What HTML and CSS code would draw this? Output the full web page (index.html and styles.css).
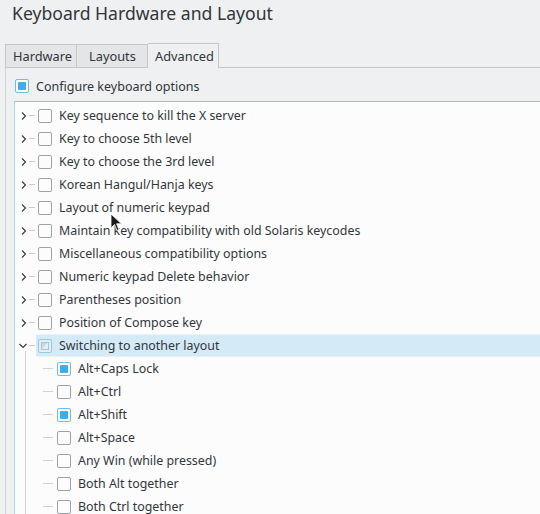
FILE: index.html
```html
<!DOCTYPE html>
<html>
<head>
<meta charset="utf-8">
<link rel="stylesheet" href="styles.css">
</head>
<body>
<div class="title">Keyboard Hardware and Layout</div>
<div class="tabbar">
  <div class="tab">Hardware</div>
  <div class="tab">Layouts</div>
  <div class="tab active">Advanced</div>
  <div class="filler"></div>
</div>
<div class="panel">
  <div class="configure"><span class="cb checked"></span><span>Configure keyboard options</span></div>
  <div class="tree">
    <div class="row"><span class="exp"><svg class="chev" width="8" height="8" viewBox="0 0 8 8"><polyline points="2,0.5 5.5,4 2,7.5"/></svg><span class="dash"></span></span><span class="item"><span class="cb"></span><span>Key sequence to kill the X server</span></span></div>
    <div class="row"><span class="exp"><svg class="chev" width="8" height="8" viewBox="0 0 8 8"><polyline points="2,0.5 5.5,4 2,7.5"/></svg><span class="dash"></span></span><span class="item"><span class="cb"></span><span>Key to choose 5th level</span></span></div>
    <div class="row"><span class="exp"><svg class="chev" width="8" height="8" viewBox="0 0 8 8"><polyline points="2,0.5 5.5,4 2,7.5"/></svg><span class="dash"></span></span><span class="item"><span class="cb"></span><span>Key to choose the 3rd level</span></span></div>
    <div class="row"><span class="exp"><svg class="chev" width="8" height="8" viewBox="0 0 8 8"><polyline points="2,0.5 5.5,4 2,7.5"/></svg><span class="dash"></span></span><span class="item"><span class="cb"></span><span>Korean Hangul/Hanja keys</span></span></div>
    <div class="row"><span class="exp"><svg class="chev" width="8" height="8" viewBox="0 0 8 8"><polyline points="2,0.5 5.5,4 2,7.5"/></svg><span class="dash"></span></span><span class="item"><span class="cb"></span><span>Layout of numeric keypad</span></span></div>
    <div class="row"><span class="exp"><svg class="chev" width="8" height="8" viewBox="0 0 8 8"><polyline points="2,0.5 5.5,4 2,7.5"/></svg><span class="dash"></span></span><span class="item"><span class="cb"></span><span>Maintain key compatibility with old Solaris keycodes</span></span></div>
    <div class="row"><span class="exp"><svg class="chev" width="8" height="8" viewBox="0 0 8 8"><polyline points="2,0.5 5.5,4 2,7.5"/></svg><span class="dash"></span></span><span class="item"><span class="cb"></span><span>Miscellaneous compatibility options</span></span></div>
    <div class="row"><span class="exp"><svg class="chev" width="8" height="8" viewBox="0 0 8 8"><polyline points="2,0.5 5.5,4 2,7.5"/></svg><span class="dash"></span></span><span class="item"><span class="cb"></span><span>Numeric keypad Delete behavior</span></span></div>
    <div class="row"><span class="exp"><svg class="chev" width="8" height="8" viewBox="0 0 8 8"><polyline points="2,0.5 5.5,4 2,7.5"/></svg><span class="dash"></span></span><span class="item"><span class="cb"></span><span>Parentheses position</span></span></div>
    <div class="row"><span class="exp"><svg class="chev" width="8" height="8" viewBox="0 0 8 8"><polyline points="2,0.5 5.5,4 2,7.5"/></svg><span class="dash"></span></span><span class="item"><span class="cb"></span><span>Position of Compose key</span></span></div>
    <div class="row"><span class="exp"><svg class="chev down" width="8" height="8" viewBox="0 0 8 8"><polyline points="0.5,2 4,5.5 7.5,2"/></svg><span class="dash"></span></span><span class="item selected"><span class="cb partial"></span><span>Switching to another layout</span></span></div>
    <div class="children">
      <div class="row child"><span class="indent"><span class="hline"></span></span><span class="item"><span class="cb checked"></span><span>Alt+Caps Lock</span></span></div>
      <div class="row child"><span class="indent"><span class="hline"></span></span><span class="item"><span class="cb"></span><span>Alt+Ctrl</span></span></div>
      <div class="row child"><span class="indent"><span class="hline"></span></span><span class="item"><span class="cb checked"></span><span>Alt+Shift</span></span></div>
      <div class="row child"><span class="indent"><span class="hline"></span></span><span class="item"><span class="cb"></span><span>Alt+Space</span></span></div>
      <div class="row child"><span class="indent"><span class="hline"></span></span><span class="item"><span class="cb"></span><span>Any Win (while pressed)</span></span></div>
      <div class="row child"><span class="indent"><span class="hline"></span></span><span class="item"><span class="cb"></span><span>Both Alt together</span></span></div>
      <div class="row child"><span class="indent"><span class="hline"></span></span><span class="item"><span class="cb"></span><span>Both Ctrl together</span></span></div>
    </div>
  </div>
</div>
<svg class="cursor" width="14" height="20" viewBox="0 0 14 20"><path d="M1,1 L1,15 L4.5,11.5 L7,17.5 L9,16.6 L6.6,10.8 L11.5,10.8 Z" fill="#1b1b1b" stroke="#ffffff" stroke-width="0.8" stroke-linejoin="round"/></svg>
</body>
</html>
```

FILE: styles.css
```css
html, body {
  margin: 0;
  padding: 0;
  overflow: hidden;
}
body {
  width: 540px;
  height: 514px;
  background: #eff0f1;
  color: #31363b;
  font-family: "Noto Sans", "DejaVu Sans", sans-serif;
  font-size: 12.4px;
  position: relative;
}
.title {
  font-size: 17.6px;
  line-height: 24px;
  padding: 1px 0 0 12px;
  height: 41px;
  box-sizing: border-box;
}
.tabbar {
  display: flex;
  margin-top: 2px;
  padding-left: 5px;
  height: 25px;
  font-size: 12.8px;
}
.tab {
  box-sizing: border-box;
  height: 24px;
  margin-top: 1px;
  line-height: 22px;
  border: 1px solid #c4c6c8;
  border-left: none;
  background: #e3e5e7;
  padding: 0 7px 0 8px;
}
.tab:first-child {
  border-left: 1px solid #c4c6c8;
}
.tab:nth-child(1) { width: 72px; padding-left: 7px; }
.tab:nth-child(2) { width: 71px; padding-left: 12px; }
.tab.active {
  width: 71px;
  height: 25px;
  margin-top: 0;
  background: #eff0f1;
  border-bottom: none;
  line-height: 24px;
  padding-left: 7px;
}
.filler {
  flex: 1;
  border-bottom: 1px solid #c4c6c8;
}
.panel {
  margin-left: 5px;
  border-left: 1px solid #d3d5d7;
  padding-top: 7px;
  height: 460px;
}
.configure {
  display: flex;
  align-items: center;
  height: 22px;
  padding-left: 9px;
  font-size: 12.5px;
}
.configure .cb {
  margin-right: 7px;
}
.tree {
  margin: 4px 0 0 8px;
  border-top: 1px solid #7fc8ee;
  border-left: 1px solid #a9d8f1;
  background: #fcfcfc;
  padding-top: 2px;
  height: 420px;
}
.row {
  display: flex;
  height: 23px;
  align-items: stretch;
}
.exp {
  width: 21px;
  flex: none;
  position: relative;
  display: flex;
  align-items: center;
}
.chev {
  margin-left: 5px;
  fill: none;
  stroke: #31363b;
  stroke-width: 1.1;
}
.chev.down {
  margin-left: 4px;
}
.dash {
  position: absolute;
  left: 14px;
  top: 11px;
  width: 6px;
  border-top: 1px dashed #c8cacc;
}
.item {
  flex: 1;
  display: flex;
  align-items: center;
  padding-left: 2px;
}
.item.selected {
  background: #d5eaf7;
  border-top: 1px solid #e6f3fb;
  border-bottom: 1px solid #e6f3fb;
  box-sizing: border-box;
}
.cb {
  box-sizing: border-box;
  width: 14px;
  height: 14px;
  border: 1px solid #9fa2a5;
  border-radius: 2px;
  background: #fcfcfc;
  margin-right: 7px;
  flex: none;
  position: relative;
}
.cb.checked {
  border-color: #6fbde6;
}
.cb.checked::after {
  content: "";
  position: absolute;
  left: 2px;
  top: 2px;
  width: 8px;
  height: 8px;
  background: #3daee9;
  border-radius: 1px;
}
.cb.partial {
  border-color: #9cc7e2;
  background: #e4eef5;
}
.cb.partial::after {
  content: "";
  position: absolute;
  left: 2px;
  top: 2px;
  width: 8px;
  height: 8px;
  border: 1px solid #aac3d6;
  box-sizing: border-box;
  background: linear-gradient(135deg, #c9d9e6 50%, #e4eef5 50%);
}
.children {
  position: relative;
}
.children::before {
  content: "";
  position: absolute;
  left: 10px;
  top: -6px;
  bottom: 0;
  border-left: 1px solid #d0d2d4;
}
.indent {
  width: 40px;
  flex: none;
  position: relative;
}
.hline {
  position: absolute;
  left: 28px;
  top: 11px;
  width: 10px;
  border-top: 1px solid #cfd1d3;
}
.cursor {
  position: absolute;
  left: 110px;
  top: 213px;
}
```
